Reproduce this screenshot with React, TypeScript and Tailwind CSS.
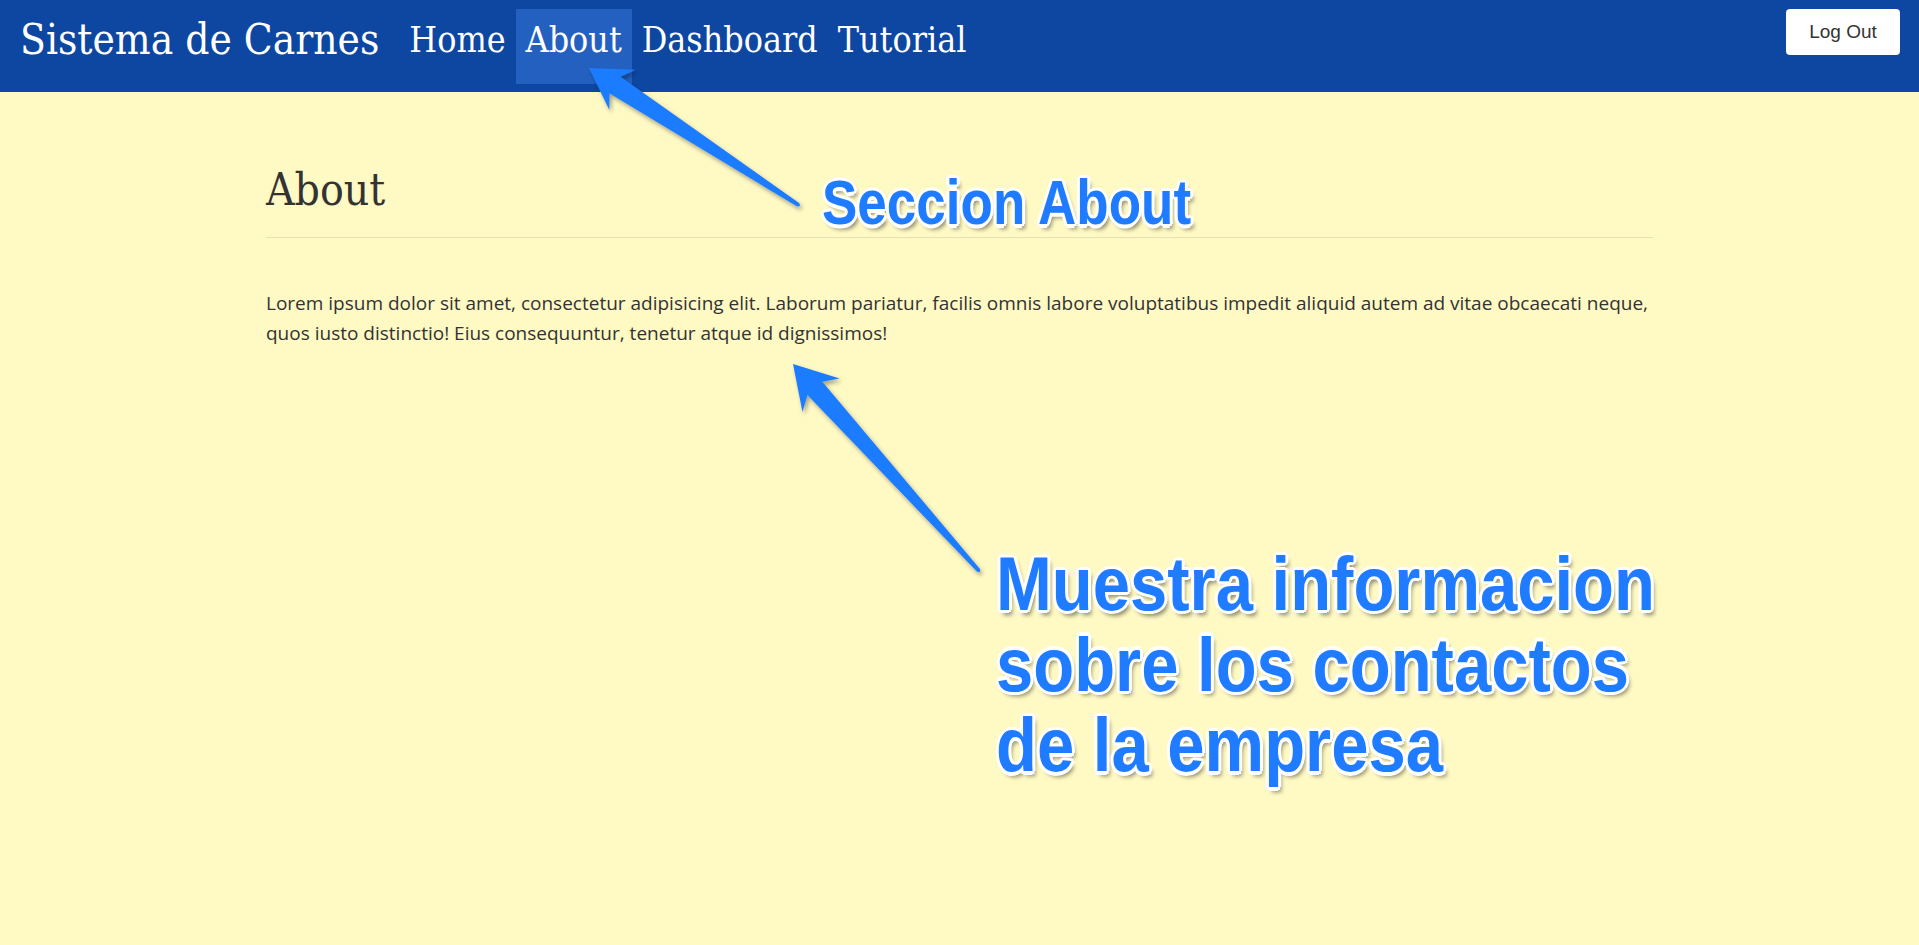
import React from "react";

type Pt = [number, number];

// builds the outline of a tapered callout arrow (thin tail -> wide head)
function arrowPoints(tip: Pt, tail: Pt, headLen: number, headW: number, shaftW: number) {
  const dx = tail[0] - tip[0];
  const dy = tail[1] - tip[1];
  const len = Math.hypot(dx, dy);
  const ux = dx / len;
  const uy = dy / len;
  const px = -uy;
  const py = ux;
  const at = (d: number, o: number): Pt => [tip[0] + ux * d + px * o, tip[1] + uy * d + py * o];
  const pts: Pt[] = [
    tip,
    at(headLen, headW),
    at(headLen * 0.78, shaftW),
    at(len - 2, 2),
    at(len, 0),
    at(len - 2, -2),
    at(headLen * 0.78, -shaftW),
    at(headLen, -headW),
  ];
  return pts.map((p) => p.join(",")).join(" ");
}

const NAV = ["Home", "About", "Dashboard", "Tutorial"];

const outline =
  "[text-shadow:3px_0_0_#fff,-3px_0_0_#fff,0_3px_0_#fff,0_-3px_0_#fff,2px_2px_0_#fff,-2px_-2px_0_#fff,2px_-2px_0_#fff,-2px_2px_0_#fff,3px_4px_4px_rgba(0,0,0,0.45)]";

export default function App() {
  return (
    <div className="relative min-h-[945px] bg-[#fff9c4]">
      <nav className="flex h-[92px] items-center bg-[#0d47a1] pl-5 pr-[19px]">
        <span className="font-['DejaVu_Serif_Condensed','DejaVu_Serif',serif] font-stretch-condensed text-[42px] leading-none text-white pb-3">
          Sistema de Carnes
        </span>
        <ul className="ml-5 flex">
          {NAV.map((n) => (
            <li
              key={n}
              className={[
                "flex h-[75px] items-center px-[10px] pb-3",
                "font-['DejaVu_Serif_Condensed','DejaVu_Serif',serif] font-stretch-condensed text-[35.5px] leading-none text-white",
                n === "About" ? "bg-[#2360c0]" : "",
              ].join(" ")}
            >
              {n}
            </li>
          ))}
        </ul>
        <button className="ml-auto self-start mt-[9px] h-[46px] w-[114px] rounded bg-white font-['Liberation_Sans',Arial,sans-serif] text-[19px] text-[#333]">
          Log Out
        </button>
      </nav>

      <main className="mx-auto w-[1387px]">
        <h1 className="pt-[72px] font-['DejaVu_Serif_Condensed','DejaVu_Serif',serif] font-stretch-condensed text-[44px] leading-[52px] text-[#333]">
          About
        </h1>
        <hr className="mt-[21px] border-t border-[#e6e0b4]" />
        <p className="mt-[50px] font-['Open_Sans',sans-serif] text-[19px] leading-[30px] text-[#333]">
          Lorem ipsum dolor sit amet, consectetur adipisicing elit. Laborum pariatur, facilis omnis labore voluptatibus
          impedit aliquid autem ad vitae obcaecati neque, quos iusto distinctio! Eius consequuntur, tenetur atque id
          dignissimos!
        </p>
      </main>

      {/* annotation layer drawn over the screenshot */}
      <svg className="pointer-events-none absolute left-0 top-0" width="1919" height="945">
        <defs>
          <filter id="sh" x="-20%" y="-20%" width="140%" height="140%">
            <feDropShadow dx="2" dy="3" stdDeviation="2" floodColor="#000" floodOpacity="0.35" />
          </filter>
        </defs>
        <polygon points={arrowPoints([589, 68], [800, 206], 40, 24, 10)} fill="#1f7bff" filter="url(#sh)" />
        <polygon points={arrowPoints([793, 364], [980, 572], 42, 25, 10)} fill="#1f7bff" filter="url(#sh)" />
      </svg>

      <div
        className={`absolute left-[822px] top-[171px] origin-top scale-y-[1.18] font-['Liberation_Sans',Arial,sans-serif] text-[53px] font-bold leading-none text-[#1f7bff] ${outline}`}
      >
        Seccion About
      </div>
      <div
        className={`absolute left-[996px] top-[544px] origin-top scale-y-[1.12] font-['Liberation_Sans',Arial,sans-serif] text-[67px] font-bold leading-[72px] text-[#1f7bff] ${outline}`}
      >
        Muestra informacion
        <br />
        sobre los contactos
        <br />
        de la empresa
      </div>
    </div>
  );
}
